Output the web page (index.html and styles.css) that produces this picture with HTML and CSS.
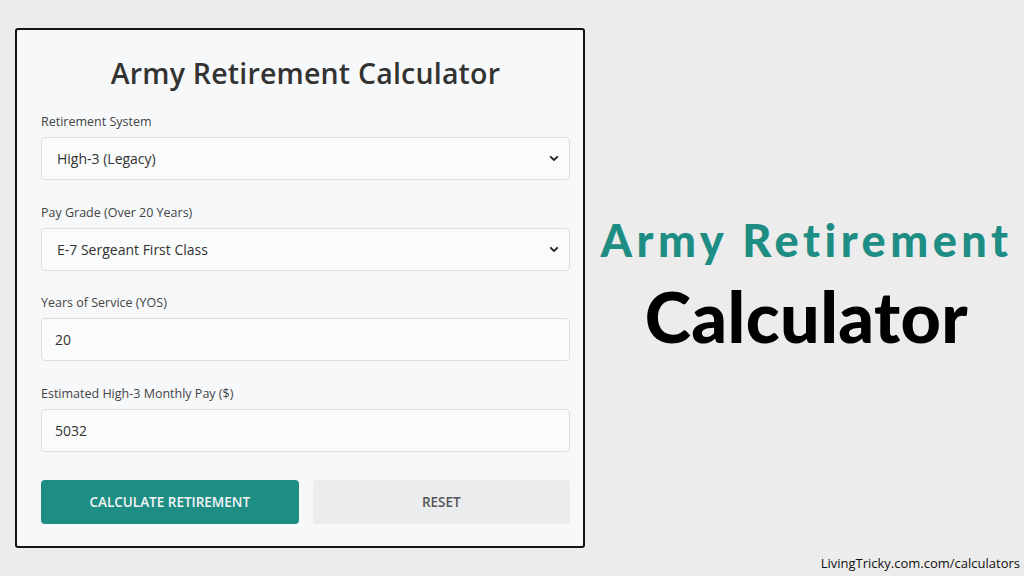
FILE: index.html
```html
<!DOCTYPE html>
<html>
<head>
<meta charset="utf-8">
<link rel="stylesheet" href="styles.css">
</head>
<body>
<div class="page">
  <div class="card">
    <h1 class="title">Army Retirement Calculator</h1>
    <div class="field">
      <label class="label">Retirement System</label>
      <div class="control select">
        <span>High-3 (Legacy)</span>
        <svg class="chev" width="10" height="7" viewBox="0 0 10 7"><path d="M1.2 1.3 L5 5 L8.8 1.3" fill="none" stroke="#222" stroke-width="1.8"/></svg>
      </div>
    </div>
    <div class="field">
      <label class="label">Pay Grade (Over 20 Years)</label>
      <div class="control select">
        <span>E-7 Sergeant First Class</span>
        <svg class="chev" width="10" height="7" viewBox="0 0 10 7"><path d="M1.2 1.3 L5 5 L8.8 1.3" fill="none" stroke="#222" stroke-width="1.8"/></svg>
      </div>
    </div>
    <div class="field">
      <label class="label">Years of Service (YOS)</label>
      <div class="control input"><span>20</span></div>
    </div>
    <div class="field">
      <label class="label">Estimated High-3 Monthly Pay ($)</label>
      <div class="control input"><span>5032</span></div>
    </div>
    <div class="buttons">
      <button class="btn primary">CALCULATE RETIREMENT</button>
      <button class="btn secondary">RESET</button>
    </div>
  </div>
  <div class="hero">
    <div class="hero-line1">Army Retirement</div>
    <div class="hero-line2">Calculator</div>
  </div>
</div>
<div class="footer">LivingTricky.com.com/calculators</div>
</body>
</html>
```
FILE: styles.css
```css
* { box-sizing: border-box; }
html, body { margin: 0; padding: 0; }
body {
  width: 1024px;
  height: 576px;
  background: #ececec;
  font-family: "Open Sans", "Noto Sans", sans-serif;
  position: relative;
  overflow: hidden;
}
.page {
  display: flex;
  align-items: flex-start;
  padding: 28px 0 0 15px;
}
.card {
  width: 570px;
  height: 520px;
  border: 2px solid #151515;
  border-radius: 3px;
  background: #f7f8fa;
  padding: 23px 13px 0 24px;
  display: flex;
  flex-direction: column;
}
.title {
  margin: 0 0 20px;
  font-size: 28.5px;
  line-height: 40px;
  font-weight: 600;
  letter-spacing: 0.2px;
  color: #333;
  text-align: center;
}
.field {
  display: flex;
  flex-direction: column;
  margin-bottom: 23.5px;
}
.label {
  font-size: 12.5px;
  line-height: 17px;
  color: #444;
  margin-bottom: 7px;
}
.control {
  height: 43px;
  border: 1px solid #dcdddf;
  border-radius: 4px;
  background: #fafbfb;
  display: flex;
  align-items: center;
  font-size: 14px;
  color: #333;
  padding: 0 14px;
  justify-content: space-between;
}
.select { padding-left: 15px; }
.input { padding-left: 13px; }
.chev { margin-right: -4px; }
.buttons {
  display: flex;
  gap: 14px;
  margin-top: 5px;
}
.btn {
  flex: 1;
  height: 44px;
  border: none;
  border-radius: 4px;
  font-family: "Open Sans", "Noto Sans", sans-serif;
  font-size: 13.5px;
  font-weight: 600;
}
.primary { background: #1e8e84; color: #f4f4f4; }
.secondary { background: #ebecee; color: #555; }
.hero {
  flex: 1;
  display: flex;
  flex-direction: column;
  align-items: center;
  padding-top: 187px;
  padding-left: 4px;
}
.hero-line1 {
  font-family: "Lato", sans-serif;
  font-weight: 900;
  font-size: 45px;
  line-height: 50px;
  letter-spacing: 4.5px;
  color: #1e8e84;
}
.hero-line2 {
  font-family: "Lato", sans-serif;
  font-weight: 900;
  font-size: 70px;
  line-height: 70px;
  letter-spacing: 0.4px;
  margin-top: 16px;
  color: #000;
}
.footer {
  position: absolute;
  right: 4px;
  bottom: 4px;
  font-family: "Open Sans", sans-serif;
  font-size: 13px;
  color: #111;
}
```
